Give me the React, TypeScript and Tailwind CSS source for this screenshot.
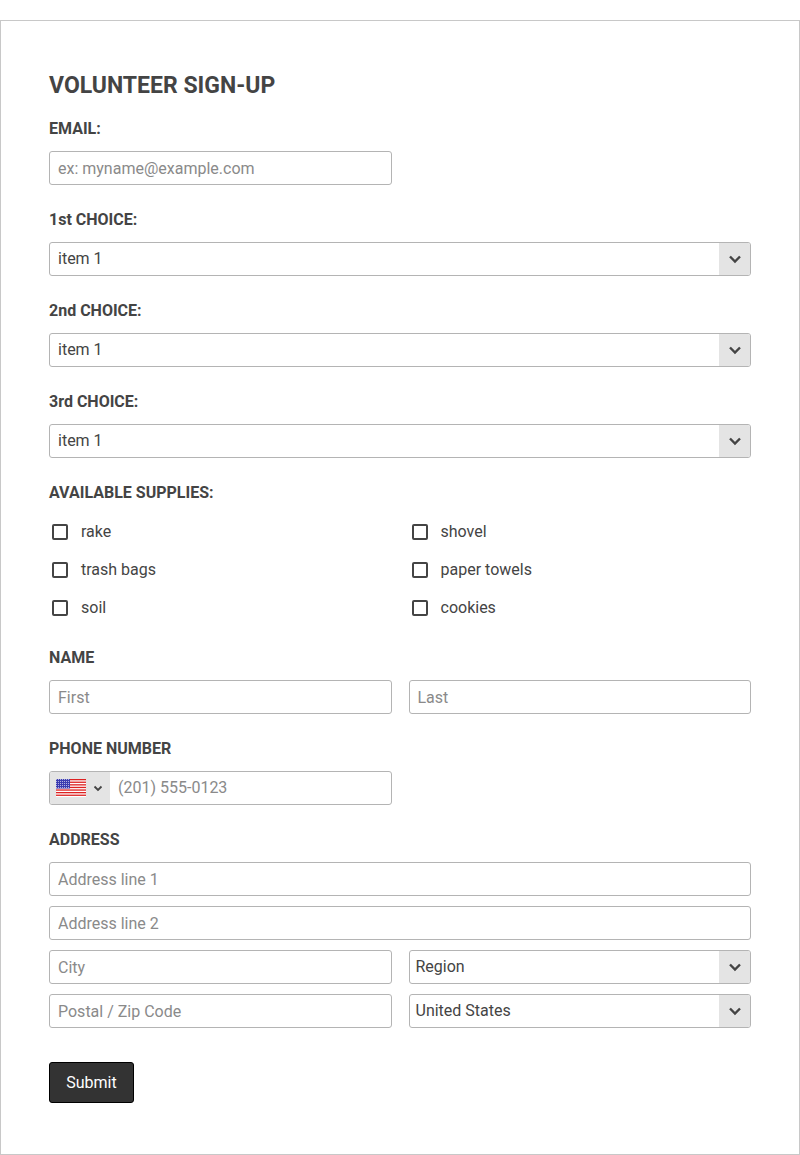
import React from "react";

const inputCls = "h-[34px] w-full rounded-[3px] border border-[#b4b4b4] bg-white px-2 text-[16px] text-[#444] placeholder:text-[#8a8a8a] outline-none";

function Label({ children }: { children: React.ReactNode }) {
  return <div className="mb-[12px] h-[20px] text-[16px] font-bold leading-[20px] text-[#444]">{children}</div>;
}

function Chevron() {
  return (
    <svg width="16" height="16" viewBox="0 0 16 16"><path d="M3 5.5l5 5 5-5" fill="none" stroke="#444" strokeWidth="2.4" /></svg>
  );
}

function Select({ value }: { value: string }) {
  return (
    <div className="flex h-[34px] w-full overflow-hidden rounded-[3px] border border-[#b4b4b4] bg-white">
      <div className="flex flex-1 items-center px-2 text-[16px] text-[#444]">{value}</div>
      <div className="flex w-[31px] items-center justify-center bg-[#e4e4e4]"><Chevron /></div>
    </div>
  );
}

function Check({ label }: { label: string }) {
  return (
    <div className="flex h-[38px] items-center">
      <div className="ml-[3px] h-[16px] w-[16px] rounded-[2px] border-2 border-[#444]" />
      <span className="ml-[13px] text-[16px] text-[#444]">{label}</span>
    </div>
  );
}

function Flag() {
  const stripes = [];
  for (let i = 0; i < 7; i++) stripes.push(<rect key={i} x="0" y={i * 2.6} width="30" height="1.3" fill="#d22" />);
  return (
    <svg width="30" height="18" viewBox="0 0 30 18">
      <rect width="30" height="18" fill="#fff" />
      {stripes}
      <rect x="0" y="0" width="14" height="9.5" fill="#3b3bb0" />
      <rect x="0" y="0" width="14" height="9.5" fill="url(#d)" opacity="0.6" />
      <defs>
        <pattern id="d" width="2" height="2" patternUnits="userSpaceOnUse"><rect width="1" height="1" fill="#fff" /></pattern>
      </defs>
    </svg>
  );
}

export default function App() {
  return (
    <div className="pt-[20px]" style={{ fontFamily: "Roboto, sans-serif" }}>
      <div className="h-[1135px] border border-[#c8c8c8] px-[48px] pt-[49px]">
        <h1 className="mb-[17px] h-[32px] text-[23px] font-bold leading-[32px] text-[#444]">VOLUNTEER SIGN-UP</h1>
        <Label>EMAIL:</Label>
        <div className="mb-[25px] w-[343px]"><input className={inputCls} placeholder="ex: myname@example.com" /></div>
        {["1st", "2nd", "3rd"].map((c) => (
          <div key={c} className="mb-[25px]">
            <Label>{c} CHOICE:</Label>
            <Select value="item 1" />
          </div>
        ))}
        <Label>AVAILABLE SUPPLIES:</Label>
        <div className="-mt-[2px] mb-[21px] grid grid-cols-2 gap-x-[17px]">
          <Check label="rake" /><Check label="shovel" />
          <Check label="trash bags" /><Check label="paper towels" />
          <Check label="soil" /><Check label="cookies" />
        </div>
        <Label>NAME</Label>
        <div className="mb-[25px] grid grid-cols-2 gap-x-[17px]">
          <input className={inputCls} placeholder="First" />
          <input className={inputCls} placeholder="Last" />
        </div>
        <Label>PHONE NUMBER</Label>
        <div className="mb-[25px] flex h-[34px] w-[343px] overflow-hidden rounded-[3px] border border-[#b4b4b4]">
          <div className="flex w-[60px] items-center gap-[6px] bg-[#e4e4e4] pl-[6px]">
            <Flag />
            <svg width="12" height="12" viewBox="0 0 12 12"><path d="M2.5 4.5l3.5 3.5 3.5-3.5" fill="none" stroke="#444" strokeWidth="1.8" /></svg>
          </div>
          <input className="flex-1 px-2 text-[16px] text-[#444] placeholder:text-[#8a8a8a] outline-none" placeholder="(201) 555-0123" />
        </div>
        <Label>ADDRESS</Label>
        <div className="flex flex-col gap-[10px]">
          <input className={inputCls} placeholder="Address line 1" />
          <input className={inputCls} placeholder="Address line 2" />
          <div className="grid grid-cols-2 gap-x-[17px]">
            <input className={inputCls} placeholder="City" />
            <div className="[&>div>div:first-child]:px-[6px]"><Select value="Region" /></div>
          </div>
          <div className="grid grid-cols-2 gap-x-[17px]">
            <input className={inputCls} placeholder="Postal / Zip Code" />
            <div className="[&>div>div:first-child]:px-[6px]"><Select value="United States" /></div>
          </div>
        </div>
        <button className="mt-[34px] h-[41px] w-[85px] rounded-[3px] border border-black bg-[#333] text-[16px] text-white">Submit</button>
      </div>
    </div>
  );
}
